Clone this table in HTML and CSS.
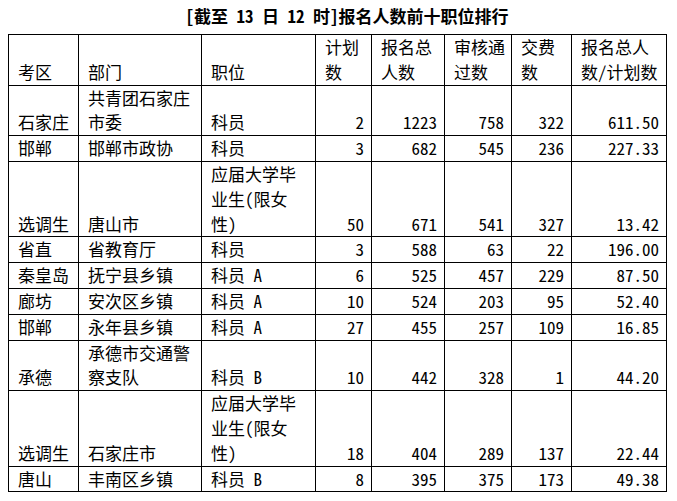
FILE: index.html
```html
<!DOCTYPE html>
<html lang="zh-CN">
<head>
<meta charset="utf-8">
<title>报名人数前十职位排行</title>
<link rel="stylesheet" href="styles.css">
</head>
<body>
<div class="page">
  <h1 class="title">[截至 13 日 12 时]报名人数前十职位排行</h1>
  <table class="rank">
    <colgroup>
      <col class="c1"><col class="c2"><col class="c3"><col class="c4"><col class="c5"><col class="c6"><col class="c7"><col class="c8">
    </colgroup>
    <thead>
      <tr>
        <th>考区</th>
        <th>部门</th>
        <th>职位</th>
        <th>计划<br>数</th>
        <th>报名总<br>人数</th>
        <th>审核通<br>过数</th>
        <th>交费<br>数</th>
        <th>报名总人<br>数/计划数</th>
      </tr>
    </thead>
    <tbody>
      <tr><td>石家庄</td><td>共青团石家庄<br>市委</td><td>科员</td><td class="n">2</td><td class="n">1223</td><td class="n">758</td><td class="n">322</td><td class="n">611.50</td></tr>
      <tr><td>邯郸</td><td>邯郸市政协</td><td>科员</td><td class="n">3</td><td class="n">682</td><td class="n">545</td><td class="n">236</td><td class="n">227.33</td></tr>
      <tr><td>选调生</td><td>唐山市</td><td>应届大学毕<br>业生(限女<br>性)</td><td class="n">50</td><td class="n">671</td><td class="n">541</td><td class="n">327</td><td class="n">13.42</td></tr>
      <tr><td>省直</td><td>省教育厅</td><td>科员</td><td class="n">3</td><td class="n">588</td><td class="n">63</td><td class="n">22</td><td class="n">196.00</td></tr>
      <tr><td>秦皇岛</td><td>抚宁县乡镇</td><td>科员 A</td><td class="n">6</td><td class="n">525</td><td class="n">457</td><td class="n">229</td><td class="n">87.50</td></tr>
      <tr><td>廊坊</td><td>安次区乡镇</td><td>科员 A</td><td class="n">10</td><td class="n">524</td><td class="n">203</td><td class="n">95</td><td class="n">52.40</td></tr>
      <tr><td>邯郸</td><td>永年县乡镇</td><td>科员 A</td><td class="n">27</td><td class="n">455</td><td class="n">257</td><td class="n">109</td><td class="n">16.85</td></tr>
      <tr><td>承德</td><td>承德市交通警<br>察支队</td><td>科员 B</td><td class="n">10</td><td class="n">442</td><td class="n">328</td><td class="n">1</td><td class="n">44.20</td></tr>
      <tr><td>选调生</td><td>石家庄市</td><td>应届大学毕<br>业生(限女<br>性)</td><td class="n">18</td><td class="n">404</td><td class="n">289</td><td class="n">137</td><td class="n">22.44</td></tr>
      <tr><td>唐山</td><td>丰南区乡镇</td><td>科员 B</td><td class="n">8</td><td class="n">395</td><td class="n">375</td><td class="n">173</td><td class="n">49.38</td></tr>
    </tbody>
  </table>
</div>
</body>
</html>
```

FILE: styles.css
```css
html, body {
  margin: 0;
  padding: 0;
  background: #fff;
  color: #000;
}

.page {
  padding: 3px 0 0 8px;
  font-family: "Noto Sans CJK SC", "Noto Sans", sans-serif;
  font-feature-settings: "hwid" 1;
}

.title {
  width: 659px;
  margin: 0 0 5px 0;
  padding-left: 19px;
  box-sizing: border-box;
  font-size: 17px;
  line-height: 26px;
  font-weight: bold;
  text-align: center;
  white-space: nowrap;
}

.rank {
  border-collapse: collapse;
  table-layout: fixed;
  width: 659px;
  font-size: 17px;
  line-height: 24.8px;
}

.rank .c1 { width: 70px; }
.rank .c2 { width: 123px; }
.rank .c3 { width: 114px; }
.rank .c4 { width: 56px; }
.rank .c5 { width: 73px; }
.rank .c6 { width: 67px; }
.rank .c7 { width: 60px; }
.rank .c8 { width: 95px; }

.rank th,
.rank td {
  border: 1px solid #000;
  padding: 0 7px 0 9px;
  vertical-align: bottom;
  text-align: left;
  font-weight: normal;
  white-space: nowrap;
}

.rank td.n {
  text-align: right;
}
```
